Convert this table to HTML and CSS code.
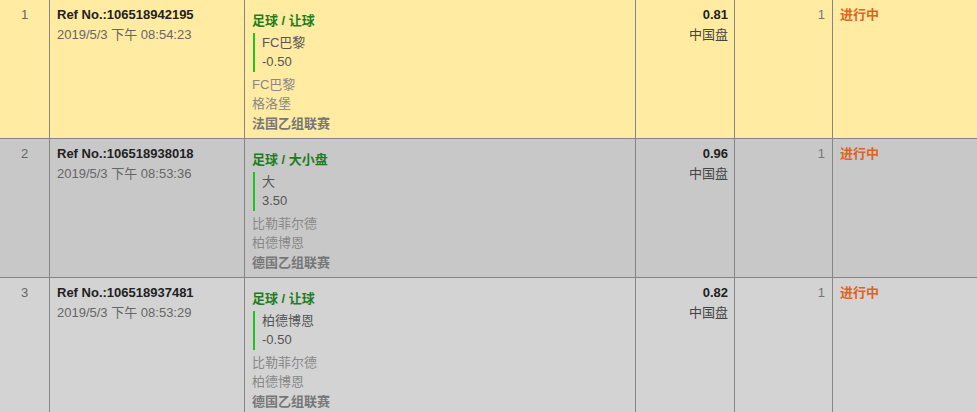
FILE: index.html
```html
<!DOCTYPE html>
<html lang="zh-CN">
<head>
<meta charset="utf-8">
<title>注单</title>
<link rel="stylesheet" href="styles.css">
</head>
<body>
<div class="list">
  <div class="row row-yellow">
    <div class="cell c-no">1</div>
    <div class="cell c-ref">
      <div class="ln ref">Ref No.:106518942195</div>
      <div class="ln date">2019/5/3 下午 08:54:23</div>
    </div>
    <div class="cell c-detail">
      <div class="ln sport">足球 / 让球</div>
      <div class="pick">
        <div class="ln">FC巴黎</div>
        <div class="ln">-0.50</div>
      </div>
      <div class="ln team">FC巴黎</div>
      <div class="ln team">格洛堡</div>
      <div class="ln league">法国乙组联赛</div>
    </div>
    <div class="cell c-odds">
      <div class="ln odds">0.81</div>
      <div class="ln odds-type">中国盘</div>
    </div>
    <div class="cell c-stake">1</div>
    <div class="cell c-status"><span class="status">进行中</span></div>
  </div>

  <div class="row row-gray">
    <div class="cell c-no">2</div>
    <div class="cell c-ref">
      <div class="ln ref">Ref No.:106518938018</div>
      <div class="ln date">2019/5/3 下午 08:53:36</div>
    </div>
    <div class="cell c-detail">
      <div class="ln sport">足球 / 大小盘</div>
      <div class="pick">
        <div class="ln">大</div>
        <div class="ln">3.50</div>
      </div>
      <div class="ln team">比勒菲尔德</div>
      <div class="ln team">柏德博恩</div>
      <div class="ln league">德国乙组联赛</div>
    </div>
    <div class="cell c-odds">
      <div class="ln odds">0.96</div>
      <div class="ln odds-type">中国盘</div>
    </div>
    <div class="cell c-stake">1</div>
    <div class="cell c-status"><span class="status">进行中</span></div>
  </div>

  <div class="row row-light">
    <div class="cell c-no">3</div>
    <div class="cell c-ref">
      <div class="ln ref">Ref No.:106518937481</div>
      <div class="ln date">2019/5/3 下午 08:53:29</div>
    </div>
    <div class="cell c-detail">
      <div class="ln sport">足球 / 让球</div>
      <div class="pick">
        <div class="ln">柏德博恩</div>
        <div class="ln">-0.50</div>
      </div>
      <div class="ln team">比勒菲尔德</div>
      <div class="ln team">柏德博恩</div>
      <div class="ln league">德国乙组联赛</div>
    </div>
    <div class="cell c-odds">
      <div class="ln odds">0.82</div>
      <div class="ln odds-type">中国盘</div>
    </div>
    <div class="cell c-stake">1</div>
    <div class="cell c-status"><span class="status">进行中</span></div>
  </div>
</div>
</body>
</html>
```

FILE: styles.css
```css
html, body {
  margin: 0;
  padding: 0;
  background: #d3d3d3;
  overflow: hidden;
}

body {
  font-family: "Liberation Sans", Arial, "Noto Sans CJK SC", sans-serif;
  font-size: 13px;
  line-height: 19.5px;
  color: #444;
}

.list {
  width: 979px;
}

.row {
  display: grid;
  grid-template-columns: 50px 195px 391px 99px 98px 146px;
  height: 138px;
  border-bottom: 1px solid #858585;
}

.row-yellow { background: #ffeba2; }
.row-gray { background: #c8c8c8; }
.row-light { background: #d3d3d3; }

.cell {
  border-right: 1px solid #858585;
  padding: 5px 7px;
  min-width: 0;
}

.ln {
  height: 19.5px;
  white-space: nowrap;
}

.c-no {
  text-align: center;
  color: #666;
  padding: 5px 0;
}

.ref {
  font-weight: bold;
  color: #222;
}

.date {
  color: #666;
}

.sport {
  margin-top: 6px;
  font-weight: bold;
  color: #1d7d1d;
}

.pick {
  margin: 2px 0 3px 1px;
  border-left: 2px solid #1fc41f;
  padding-left: 7px;
  color: #555;
}

.team {
  color: #888;
}

.league {
  font-weight: bold;
  color: #777;
}

.c-odds {
  text-align: right;
  padding-right: 6px;
}

.odds {
  font-weight: bold;
  color: #222;
}

.odds-type {
  color: #444;
}

.c-stake {
  text-align: right;
  color: #777;
}

.status {
  font-weight: bold;
  color: #e0621e;
}
```
